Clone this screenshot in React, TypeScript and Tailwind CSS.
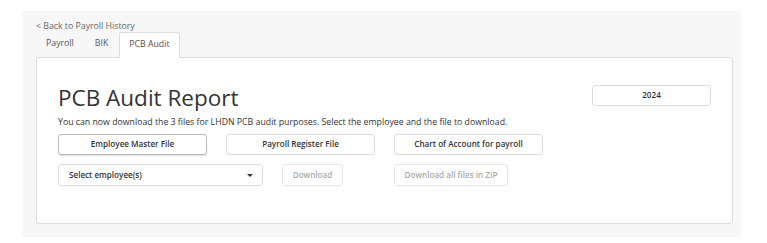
import type { ReactElement } from 'react'

function CaretDown(): ReactElement {
  return (
    <svg width="6" height="3" viewBox="0 0 6 3" className="fill-[#333]">
      <path d="M0 0h6L3 3z" />
    </svg>
  )
}

export default function App(): ReactElement {
  const font = { fontFamily: '"Open Sans", "Liberation Sans", sans-serif' }
  return (
    <div className="h-[243px] w-[767px] bg-white pt-[11px] pl-[23px]" style={font}>
      <div className="h-[226px] w-[718px] bg-[#f7f7f7] pl-[13px] pr-[8px]">
        <a className="block pt-[11px] text-[8.75px] leading-[9.5px] text-[#666]">
          &lt; Back to Payroll History
        </a>
        {/* tabs */}
        <div className="flex h-[25px] items-end text-[8.75px]">
          <div className="mr-[1px] flex h-[25px] items-center px-[10px] text-[#555]">Payroll</div>
          <div className="mr-[1px] flex h-[25px] items-center px-[10px] text-[#555]">BIK</div>
          <div className="relative -mb-px flex h-[26px] items-center rounded-t-[3px] border border-b-0 border-[#ddd] bg-white px-[9px] text-[#5b4b4b]">
            PCB Audit
          </div>
        </div>
        <div className="h-[167px] w-[697px] rounded-b-[3px] rounded-tr-[3px] border border-[#ddd] bg-white px-[21px] pt-[27px]">
          <div className="flex items-start justify-between">
            <h1 className="text-[22.5px] leading-[25px] text-[#333]">PCB Audit Report</h1>
            <button className="h-[21px] w-[119px] rounded-[3px] border border-[#ddd] bg-white text-[8.125px] font-semibold text-[#333]">
              2024
            </button>
          </div>
          <p className="mt-[6px] text-[8.75px] leading-[12.5px] text-[#333]">
            You can now download the 3 files for LHDN PCB audit purposes. Select the employee and the file to download.
          </p>
          <div className="mt-[6px] flex gap-[19px]">
            <button className="h-[21px] w-[149px] rounded-[3px] border border-[#bbb] bg-white text-[8.125px] font-semibold text-[#333] shadow-[0_1px_1px_rgba(0,0,0,0.12)]">
              Employee Master File
            </button>
            <button className="h-[21px] w-[149px] rounded-[3px] border border-[#ddd] bg-white text-[8.125px] font-semibold text-[#333]">
              Payroll Register File
            </button>
            <button className="h-[21px] w-[149px] rounded-[3px] border border-[#ddd] bg-white text-[8.125px] font-semibold text-[#333]">
              Chart of Account for payroll
            </button>
          </div>
          <div className="mt-[9px] flex items-center">
            <div className="flex h-[22px] w-[205px] items-center justify-between rounded-[3px] border border-[#ddd] bg-white pl-[10px] pr-[9px] text-[8.125px] font-semibold text-[#333]">
              <span>Select employee(s)</span>
              <CaretDown />
            </div>
            <button className="ml-[19px] h-[22px] w-[61px] rounded-[3px] border border-[#e6e6e6] bg-white text-[8.125px] font-semibold text-[#aaa]">
              Download
            </button>
            <button className="ml-[51px] h-[22px] w-[114px] rounded-[3px] border border-[#e6e6e6] bg-white text-[8.125px] font-semibold text-[#aaa]">
              Download all files in ZIP
            </button>
          </div>
        </div>
      </div>
    </div>
  )
}
